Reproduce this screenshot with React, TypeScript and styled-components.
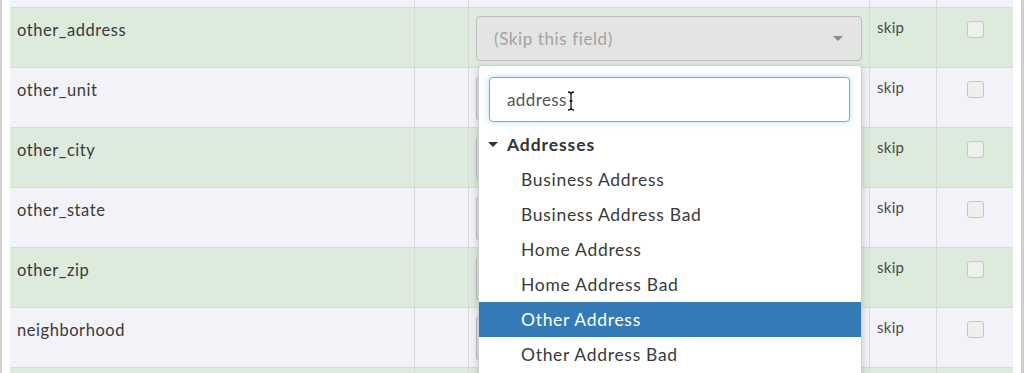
import React from 'react';
import styled, { createGlobalStyle } from 'styled-components';

const GlobalStyle = createGlobalStyle`
  html, body {
    margin: 0;
    padding: 0;
    background: #ffffff;
  }
  body {
    font-family: Lato, "Noto Sans", "Liberation Sans", sans-serif;
    color: #333333;
  }
`;

const Frame = styled.div`
  box-sizing: border-box;
  width: 1024px;
  height: 373px;
  overflow: hidden;
  background: #ffffff;
  border-left: 2px solid #cfcfcf;
  border-right: 3px solid #cfcfcf;
  padding: 0 8px;
`;

const Grid = styled.div`
  width: 1003px;
  display: flex;
  flex-direction: column;
`;

const Row = styled.div<{ $green?: boolean; $stub?: boolean }>`
  display: grid;
  grid-template-columns: 405px 54px 401px 67px 76px;
  height: ${p => (p.$stub ? '8px' : '60px')};
  box-sizing: border-box;
  border-bottom: 1px solid #d9d9d9;
  background: ${p => (p.$green ? '#dcebdc' : '#f2f2f8')};
`;

const Cell = styled.div<{ $last?: boolean }>`
  position: relative;
  box-sizing: border-box;
  border-right: ${p => (p.$last ? 'none' : '1px solid #d9d9d9')};
  padding: 8px 7px;
  min-width: 0;
`;

const NameText = styled.div`
  font-size: 16.5px;
  letter-spacing: 0.55px;
  line-height: 22px;
  padding-top: 3px;
  color: #3a3a3a;
`;

const SkipText = styled.div`
  font-size: 15px;
  letter-spacing: 0.3px;
  line-height: 20px;
  padding-top: 1px;
  color: #4a4a4a;
`;

const SelectBox = styled.div`
  box-sizing: border-box;
  height: 45px;
  border: 1px solid #bdbdbd;
  border-radius: 4px;
  background: #e4e4e4;
  display: flex;
  align-items: center;
  justify-content: space-between;
  padding: 0 18px 0 17px;
  font-size: 17px;
  letter-spacing: 0.6px;
  color: #a3a3a3;
`;

const Caret = styled.span<{ $color: string }>`
  width: 0;
  height: 0;
  border-left: 5px solid transparent;
  border-right: 5px solid transparent;
  border-top: 5px solid ${p => p.$color};
`;

const CheckCell = styled.div`
  display: flex;
  justify-content: center;
  padding-top: 5px;
`;

const Checkbox = styled.span`
  box-sizing: border-box;
  width: 17px;
  height: 17px;
  border: 1px solid #c6c6c6;
  border-radius: 3px;
  background: #eef0ee;
`;

const Dropdown = styled.div`
  position: absolute;
  z-index: 10;
  top: 57px;
  left: 9px;
  width: 384px;
  height: 330px;
  box-sizing: border-box;
  background: #ffffff;
  border: 1px solid #cfcfcf;
  border-radius: 4px 4px 0 0;
  box-shadow: 0 3px 8px rgba(0, 0, 0, 0.18);
  padding: 11px 11px 0 10px;
`;

const SearchInput = styled.div`
  box-sizing: border-box;
  height: 45px;
  border: 1px solid #66afe9;
  border-radius: 4px;
  box-shadow: 0 0 6px rgba(102, 175, 233, 0.45);
  display: flex;
  align-items: center;
  padding-left: 17px;
  font-size: 17px;
  letter-spacing: 0.4px;
  color: #555555;
`;

const IBeam = styled.svg`
  margin-left: 0;
  margin-top: 2px;
`;

const List = styled.div`
  margin: 5px -11px 0 -10px;
`;

const GroupHeader = styled.div`
  display: flex;
  align-items: center;
  gap: 9px;
  height: 35px;
  padding-left: 9px;
  font-size: 17.5px;
  letter-spacing: 0.9px;
  font-weight: 700;
  color: #333333;
`;

const Option = styled.div<{ $active?: boolean }>`
  height: 35px;
  display: flex;
  align-items: center;
  padding-left: 42px;
  font-size: 17.5px;
  letter-spacing: 0.7px;
  color: ${p => (p.$active ? '#ffffff' : '#3a3a3a')};
  background: ${p => (p.$active ? '#337ab7' : 'transparent')};
`;

const rows = [
  'other_address',
  'other_unit',
  'other_city',
  'other_state',
  'other_zip',
  'neighborhood',
];

const options = [
  'Business Address',
  'Business Address Bad',
  'Home Address',
  'Home Address Bad',
  'Other Address',
  'Other Address Bad',
];

function FieldSelect({ covered }: { covered?: boolean }) {
  return (
    <SelectBox>
      <span>{covered ? '' : '(Skip this field)'}</span>
      <Caret $color="#8a8a8a" />
    </SelectBox>
  );
}

function OpenMenu() {
  return (
    <Dropdown>
      <SearchInput>
        address
        <IBeam width="8" height="20" viewBox="0 0 8 20">
          <path
            d="M1 1 C3 1 4 2 4 3 L4 17 C4 18 3 19 1 19 M7 1 C5 1 4 2 4 3 M4 17 C4 18 5 19 7 19 M2.5 10 L5.5 10"
            fill="none"
            stroke="#111"
            strokeWidth="1.3"
          />
        </IBeam>
      </SearchInput>
      <List>
        <GroupHeader>
          <Caret $color="#333" />
          Addresses
        </GroupHeader>
        {options.map(o => (
          <Option key={o} $active={o === 'Other Address'}>
            {o}
          </Option>
        ))}
      </List>
    </Dropdown>
  );
}

function EmptyRow({ green, stub }: { green?: boolean; stub?: boolean }) {
  return (
    <Row $green={green} $stub={stub}>
      <Cell />
      <Cell />
      <Cell />
      <Cell />
      <Cell $last />
    </Row>
  );
}

export default function App() {
  return (
    <>
      <GlobalStyle />
      <Frame>
        <Grid>
          <EmptyRow stub />
          {rows.map((name, i) => (
            <Row key={name} $green={i % 2 === 0}>
              <Cell>
                <NameText>{name}</NameText>
              </Cell>
              <Cell />
              <Cell>
                <FieldSelect covered={i > 0} />
                {i === 0 && <OpenMenu />}
              </Cell>
              <Cell>
                <SkipText>skip</SkipText>
              </Cell>
              <Cell $last>
                <CheckCell>
                  <Checkbox />
                </CheckCell>
              </Cell>
            </Row>
          ))}
          <EmptyRow green />
        </Grid>
      </Frame>
    </>
  );
}
